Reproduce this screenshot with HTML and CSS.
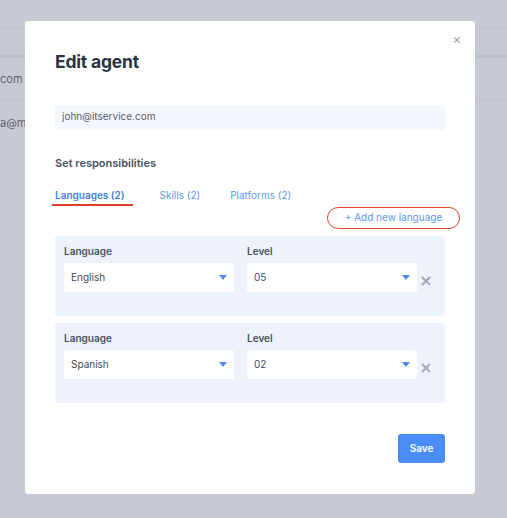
FILE: index.html
```html
<!DOCTYPE html>
<html>
<head>
    <meta charset="utf-8">
    <title>Edit agent</title>
    <link rel="stylesheet" href="styles.css">
</head>
<body>
    <div class="page">
        <div class="topbar"></div>
        <div class="subbar"></div>
        <div class="row">
            <span class="row-text">com</span>
            <span class="row-input"></span>
        </div>
        <div class="row row-last">
            <span class="row-text">a@m</span>
        </div>
    </div>

    <div class="overlay">
        <div class="modal">
            <div class="close">&times;</div>
            <h1 class="title">Edit agent</h1>
            <div class="email">john@itservice.com</div>

            <div class="section-title">Set responsibilities</div>
            <div class="tabs">
                <div class="tab active">Languages (2)</div>
                <div class="tab">Skills (2)</div>
                <div class="tab">Platforms (2)</div>
            </div>
            <div class="add-row">
                <div class="add-btn">+ Add new language</div>
            </div>

            <div class="card">
                <div class="label">Language</div>
                <div class="label">Level</div>
                <div></div>
                <div class="select">English<span class="caret"></span></div>
                <div class="select">05<span class="caret"></span></div>
                <div class="remove">
                    <svg width="10" height="10" viewBox="0 0 10 10"><path d="M1 1L9 9M9 1L1 9" stroke="#a3a9b5" stroke-width="2"/></svg>
                </div>
            </div>

            <div class="card">
                <div class="label">Language</div>
                <div class="label">Level</div>
                <div></div>
                <div class="select">Spanish<span class="caret"></span></div>
                <div class="select">02<span class="caret"></span></div>
                <div class="remove">
                    <svg width="10" height="10" viewBox="0 0 10 10"><path d="M1 1L9 9M9 1L1 9" stroke="#a3a9b5" stroke-width="2"/></svg>
                </div>
            </div>

            <div class="footer">
                <div class="save">Save</div>
            </div>
        </div>
    </div>
</body>
</html>
```

FILE: styles.css
```css
* {
    box-sizing: border-box;
    margin: 0;
    padding: 0;
}

body {
    font-family: "Inter", "Lato", sans-serif;
    background: #c6cad2;
    height: 518px;
    overflow: hidden;
    position: relative;
}

/* page behind the overlay */
.topbar {
    height: 28px;
    background: #c7cad3;
    border-bottom: 1px solid #bcc1cc;
}

.subbar {
    height: 30px;
    background: #c5c9d1;
    border-bottom: 3px solid #bac1ce;
}

.row {
    height: 43px;
    display: flex;
    align-items: center;
    border-bottom: 1px solid #bec3cc;
    font-size: 11px;
    color: #60656f;
}

.row-last {
    border-bottom: none;
}

.row-input {
    display: inline-block;
    width: 30px;
    height: 24px;
    margin-left: 2px;
    border: 1px solid #93b1de;
    border-radius: 3px;
}

/* modal */
.overlay {
    position: absolute;
    left: 0;
    top: 0;
    right: 0;
    bottom: 0;
}

.modal {
    position: relative;
    width: 450px;
    height: 473px;
    margin: 21px 0 0 25px;
    background: #fff;
    border-radius: 3px;
    padding: 30px 30px 31px;
}

.close {
    position: absolute;
    top: 10px;
    right: 14px;
    font-size: 13px;
    color: #98a0b0;
}

.title {
    font-size: 17.5px;
    line-height: 22px;
    font-weight: 700;
    color: #2a3346;
    letter-spacing: -0.2px;
}

.email {
    margin-top: 32px;
    height: 25px;
    background: #f4f7fe;
    border-radius: 3px;
    padding-left: 7px;
    font-size: 10px;
    line-height: 23px;
    color: #596170;
}

.section-title {
    margin-top: 26px;
    font-size: 11px;
    line-height: 14px;
    font-weight: 600;
    color: #4a5160;
}

.tabs {
    display: flex;
    margin-top: 18px;
    margin-left: -3px;
}

.tab {
    font-size: 10px;
    line-height: 14px;
    color: #5c97ef;
    padding: 0 3px 2px;
    margin-right: 24px;
    border-bottom: 2px solid transparent;
}

.tab.active {
    font-weight: 600;
    color: #3d7fe3;
    border-bottom-color: #e0402a;
    padding-right: 8px;
}

.add-row {
    display: flex;
    justify-content: flex-end;
    margin-right: -15px;
    margin-top: 1px;
}

.add-btn {
    width: 133px;
    height: 22px;
    border: 1.5px solid #e2442e;
    border-radius: 11px;
    font-size: 10px;
    line-height: 19px;
    text-align: center;
    color: #5c97ef;
}

.card {
    margin-top: 7px;
    height: 80px;
    background: #edf2fd;
    border-radius: 3px;
    padding: 10px 9px 0;
    display: grid;
    grid-template-columns: 170px 170px 28px;
    grid-template-rows: 17px 29px;
    column-gap: 13px;
    row-gap: 0;
}

.label {
    font-size: 10px;
    line-height: 12px;
    font-weight: 600;
    color: #4a5160;
    margin-top: -1px;
}

.select {
    position: relative;
    background: #fff;
    border-radius: 2px;
    font-size: 10px;
    line-height: 29px;
    color: #454c59;
    padding-left: 7px;
}

.caret {
    position: absolute;
    right: 7px;
    top: 12px;
    width: 0;
    height: 0;
    border-left: 4px solid transparent;
    border-right: 4px solid transparent;
    border-top: 5px solid #4a8cf0;
}

.remove {
    margin-left: -9px;
    padding-top: 13px;
}

.remove svg {
    display: block;
}

.footer {
    display: flex;
    justify-content: flex-end;
    margin-top: 31px;
}

.save {
    width: 47px;
    height: 29px;
    background: #4b8df8;
    border-radius: 3px;
    color: #fff;
    font-size: 10px;
    font-weight: 600;
    line-height: 29px;
    text-align: center;
}
```
